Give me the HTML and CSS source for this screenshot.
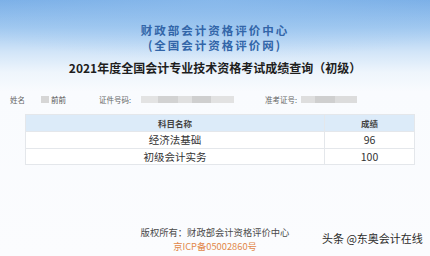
FILE: index.html
```html
<!DOCTYPE html>
<html lang="zh-CN">
<head>
    <meta charset="UTF-8">
    <meta name="viewport" content="width=device-width, initial-scale=1.0">
    <title>成绩查询</title>
    <link rel="stylesheet" href="styles.css">
</head>
<body>
    <div class="page">
        <div class="head">
            <h1>
                <span class="title-line">财政部会计资格评价中心</span>
                <span class="title-line">(全国会计资格评价网)</span>
            </h1>
            <h2>2021年度全国会计专业技术资格考试成绩查询（初级）</h2>
        </div>

        <div class="info">
            <span class="label name-label">姓名</span>
            <span class="mask mask-name"></span>
            <span class="value">前前</span>
            <span class="label id-label">证件号码:</span>
            <span class="mask mask-id"></span>
            <span class="label ticket-label">准考证号:</span>
            <span class="mask mask-ticket"></span>
        </div>

        <table class="scores">
            <thead>
                <tr>
                    <th>科目名称</th>
                    <th class="col-score">成绩</th>
                </tr>
            </thead>
            <tbody>
                <tr>
                    <td>经济法基础</td>
                    <td>96</td>
                </tr>
                <tr>
                    <td>初级会计实务</td>
                    <td>100</td>
                </tr>
            </tbody>
        </table>

        <div class="footer">
            <p>版权所有：财政部会计资格评价中心</p>
            <p class="icp">京ICP备05002860号</p>
        </div>

        <div class="watermark">头条 @东奥会计在线</div>
    </div>
</body>
</html>
```

FILE: styles.css
```css
body {
    margin: 0;
    padding: 0;
    font-family: "Noto Sans CJK SC", "Noto Sans", sans-serif;
    background-color: #fbfcfe;
}

.page {
    position: relative;
    width: 430px;
    height: 256px;
    display: flex;
    flex-direction: column;
    overflow: hidden;
    background:
        radial-gradient(ellipse 70% 60px at 50% 0, rgba(150,195,240,0.5), rgba(150,195,240,0)),
        linear-gradient(#78ade6 0, #a2c9f0 28px, #d2e5f8 52px, #eef5fc 72px, #f9fbfe 92px, #fbfcfe 100%);
}

.head {
    padding-top: 23px;
    text-align: center;
}

h1 {
    margin: 0;
    font-size: 11.5px;
    font-weight: bold;
    color: #3265a8;
    letter-spacing: 2px;
}

.title-line {
    display: block;
    line-height: 15px;
}

h2 {
    margin: 8px 0 0;
    font-size: 12px;
    line-height: 14px;
    font-weight: bold;
    color: #1e1e1e;
}

.info {
    display: flex;
    align-items: center;
    height: 10px;
    margin-top: 19px;
    padding-left: 10px;
    font-size: 7.5px;
    color: #666;
}

.label {
    white-space: nowrap;
}

.mask {
    height: 7px;
    background: #d6d6d6;
    filter: blur(0.6px);
}

.mask-name {
    width: 8px;
    margin-left: 16px;
}

.value {
    margin-left: 2px;
    color: #555;
}

.id-label {
    margin-left: 33px;
}

.mask-id {
    width: 93px;
    margin-left: 10px;
    background: linear-gradient(90deg, #e3e3e3 0 18%, #d2d2d2 18% 40%, #e0e0e0 40% 55%, #cfcfcf 55% 75%, #e2e2e2 75% 100%);
}

.ticket-label {
    margin-left: 31px;
}

.mask-ticket {
    width: 56px;
    margin-left: 4px;
    background: linear-gradient(90deg, #dedede 0 25%, #cfcfcf 25% 60%, #dcdcdc 60% 100%);
}

.scores {
    margin: 10px 0 0 25px;
    width: 390px;
    border-collapse: collapse;
    background-color: #fff;
    color: #333;
}

.scores th,
.scores td {
    border: 1px solid #e4e7eb;
    text-align: center;
    padding: 0;
}

.scores th {
    height: 16px;
    background-color: #dcebf9;
    font-size: 8.5px;
    font-weight: bold;
    color: #444;
}

.scores td {
    height: 15.5px;
    font-size: 10.5px;
}

.scores .col-score {
    width: 89px;
}

.footer {
    margin-top: auto;
    padding-bottom: 3px;
    text-align: center;
}

.footer p {
    margin: 0;
    font-size: 9.3px;
    line-height: 14px;
    color: #4a4a4a;
}

.footer .icp {
    color: #e2884a;
}

.watermark {
    position: absolute;
    left: 322px;
    top: 230px;
    font-size: 11px;
    line-height: 16px;
    color: #2a2a2a;
    text-shadow: 0 0 2px #fff, 0 0 2px #fff;
    white-space: nowrap;
}
```
